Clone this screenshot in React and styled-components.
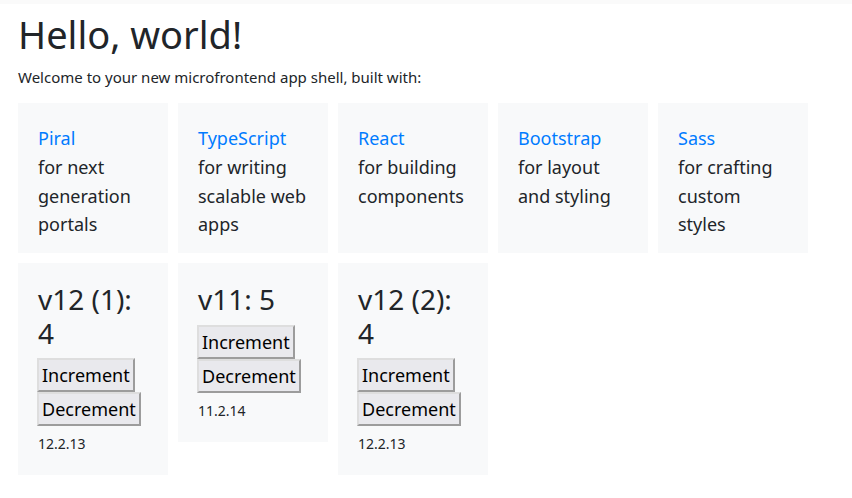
import React, { useState } from 'react';
import styled, { createGlobalStyle } from 'styled-components';

const GlobalStyle = createGlobalStyle`
  body {
    margin: 0;
    background: #ffffff;
    color: #212529;
    font-family: "Noto Sans", "Open Sans", sans-serif;
  }
`;

const tools = [
  { name: 'Piral', text: 'for next generation portals' },
  { name: 'TypeScript', text: 'for writing scalable web apps' },
  { name: 'React', text: 'for building components' },
  { name: 'Bootstrap', text: 'for layout and styling' },
  { name: 'Sass', text: 'for crafting custom styles' },
];

const Counter = ({ label, start, version }) => {
  const [count, setCount] = useState(start);

  return (
    <Tile>
      <Title>
        {label}: {count}
      </Title>
      <Button onClick={() => setCount(count + 1)}>Increment</Button>
      <Button onClick={() => setCount(count - 1)}>Decrement</Button>
      <Version>{version}</Version>
    </Tile>
  );
};

const App = () => {
  return (
    <Page>
      <GlobalStyle />
      <TopStrip />
      <Content>
        <Heading>Hello, world!</Heading>
        <Intro>Welcome to your new microfrontend app shell, built with:</Intro>
        <Grid>
          {tools.map((tool) => (
            <Card key={tool.name}>
              <Link href="#">{tool.name}</Link>
              <br />
              {tool.text}
            </Card>
          ))}
        </Grid>
        <Grid $top>
          <Counter label="v12 (1)" start={4} version="12.2.13" />
          <Counter label="v11" start={5} version="11.2.14" />
          <Counter label="v12 (2)" start={4} version="12.2.13" />
        </Grid>
      </Content>
    </Page>
  );
};

const Page = styled.div`
  min-height: 100vh;
`;

const TopStrip = styled.div`
  height: 4px;
  background: #fafafa;
`;

const Content = styled.main`
  padding: 8px 18px 20px;
`;

const Heading = styled.h1`
  font-size: 38px;
  font-weight: 400;
  line-height: 1.2;
  margin: 0 0 8px;
`;

const Intro = styled.p`
  font-size: 15px;
  line-height: 1.5;
  margin: 0 0 15px;
`;

const Grid = styled.div`
  display: flex;
  flex-wrap: wrap;
  gap: 10px;
  align-items: ${(props) => (props.$top ? 'flex-start' : 'stretch')};
  margin-top: ${(props) => (props.$top ? '10px' : '0')};
`;

const Card = styled.div`
  box-sizing: border-box;
  width: 150px;
  height: 150px;
  padding: 21px 20px 20px;
  background: #f8f9fa;
  font-size: 18px;
  line-height: 28.8px;
`;

const Link = styled.a`
  color: #007bff;
  text-decoration: none;
`;

const Tile = styled.div`
  box-sizing: border-box;
  width: 150px;
  padding: 20px 20px 21px 19px;
  background: #f8f9fa;
`;

const Title = styled.h3`
  font-size: 28px;
  font-weight: 400;
  line-height: 33.6px;
  margin: 0 0 8px 1px;
`;

const Button = styled.button`
  display: inline-block;
  box-sizing: border-box;
  height: 34px;
  margin: 0;
  padding: 0 3px;
  font-family: "Noto Sans", "Open Sans", sans-serif;
  font-size: 18px;
  color: #000000;
  background: #e9e9ed;
  border: 2px solid;
  border-color: #dedede #9c9c9c #9c9c9c #dedede;
  border-radius: 0;
`;

const Version = styled.div`
  font-size: 14px;
  line-height: 21px;
  margin: 7px 0 0 1px;
`;

export default App;
